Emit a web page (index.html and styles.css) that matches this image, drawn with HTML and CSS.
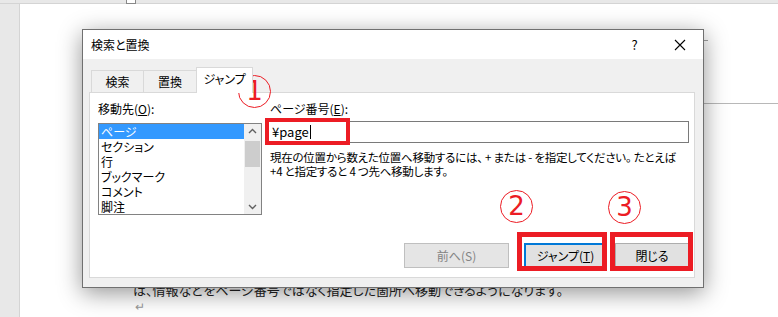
FILE: index.html
```html
<!DOCTYPE html>
<html lang="ja">
<head>
    <meta charset="utf-8" />
    <title>検索と置換</title>
    <link rel="stylesheet" href="styles.css">
</head>
<body>
<!--Word の背景-->
<div class="word">
    <div class="ruler-top"><span class="tab-mark"></span></div>
    <div class="ruler-left"></div>
    <div class="page">
        <span class="corner"></span>
        <span class="margin-line"></span>
        <p class="behind">は、情報などをページ番号ではなく指定した箇所へ移動できるようになります。</p>
        <p class="ret">↵</p>
    </div>
</div>

<!--ダイアログ-->
<div class="dialog">
    <div class="title-bar">
        <span class="title">検索と置換</span>
        <span class="title-btn">?</span>
        <span class="title-btn close">
            <svg width="12" height="12" viewBox="0 0 12 12"><path d="M1 1L11 11M11 1L1 11" stroke="#000" stroke-width="1.1" fill="none"/></svg>
        </span>
    </div>
    <div class="dlg-body">
        <ul class="tabs">
            <li class="tab">検索</li>
            <li class="tab">置換</li>
            <li class="tab active">ジャンプ</li>
        </ul>
        <div class="panel">
            <div class="col-left">
                <label class="lbl">移動先(<u>O</u>):</label>
                <div class="listbox">
                    <ul class="items">
                        <li class="sel">ページ</li>
                        <li>セクション</li>
                        <li>行</li>
                        <li>ブックマーク</li>
                        <li>コメント</li>
                        <li>脚注</li>
                    </ul>
                    <div class="vscroll">
                        <svg class="arrow" width="17" height="15" viewBox="0 0 17 15"><polyline points="5,9 8.5,5.5 12,9" fill="none" stroke="#606060" stroke-width="1.4"/></svg>
                        <div class="thumb"></div>
                        <svg class="arrow down" width="17" height="15" viewBox="0 0 17 15"><polyline points="5,6 8.5,9.5 12,6" fill="none" stroke="#606060" stroke-width="1.4"/></svg>
                    </div>
                </div>
            </div>
            <div class="col-right">
                <label class="lbl">ページ番号(<u>E</u>):</label>
                <div class="input">¥page<span class="caret"></span></div>
                <p class="help">現在の位置から数えた位置へ移動するには、 + または - を指定してください。 たとえば<br>+4 と指定すると 4 つ先へ移動します。</p>
                <div class="buttons">
                    <span class="btn btn-prev" >前へ(S)</span>
                    <span class="btn btn-jump">ジャンプ(<u>T</u>)</span>
                    <span class="btn btn-close">閉じる</span>
                </div>
            </div>
        </div>
    </div>
</div>

<!--注釈-->
<div class="redbox rb1"></div>
<div class="redbox rb2"></div>
<div class="redbox rb3"></div>
<div class="num n1">1</div>
<div class="num n2">2</div>
<div class="num n3">3</div>
</body>
</html>
```

FILE: styles.css
```css
/*page*/
html,body{margin:0;padding:0;}
body{
    width:778px;
    height:317px;
    overflow:hidden;
    position:relative;
    background:#fff;
    font-family:"Noto Sans CJK JP","Noto Sans",sans-serif;
    font-size:12px;
    color:#000;
    font-feature-settings:"palt";
}
.word{
    display:grid;
    grid-template-columns:20px 1fr;
    grid-template-rows:4px 1fr;
    height:317px;
}
.ruler-top{grid-column:1 / 3;background:#e8e8e8;border-bottom:1px solid #d4d4d4;position:relative;}
.tab-mark{position:absolute;left:126px;top:-1px;width:8px;height:3px;background:#fff;border:1px solid #888;}
.ruler-left{background:#e8e8e8;border-right:1px solid #d4d4d4;}
.page{position:relative;padding:277px 0 0 113px;}
.corner{position:absolute;left:683px;top:26px;width:4px;height:10px;border-left:1px solid #a0a0a0;border-bottom:1px solid #a0a0a0;}
.margin-line{position:absolute;left:683px;top:99px;width:80px;border-top:1px solid #b8b8b8;}
.behind{margin:0;font-size:13px;line-height:17px;color:#222;}
.ret{margin:0;line-height:16px;color:#999;font-size:12px;padding-left:2px;}

/*dialog*/
.dialog{
    position:absolute;
    left:82px;
    top:29px;
    width:620px;
    border:1px solid #707070;
    background:#f0f0f0;
    box-shadow:0 5px 22px rgba(0,0,0,.42);
}
.title-bar{
    height:29px;
    background:#fff;
    display:flex;
    align-items:center;
    padding-left:8px;
}
.title{flex:1;}
.title-btn{width:45px;text-align:center;font-size:13px;}
.title-btn.close{width:46px;display:flex;justify-content:center;}
.close svg{display:block;}
.dlg-body{padding:9px 8px 9px 6px;}
.tabs{
    list-style:none;
    margin:0 0 0 2px;padding:0;
    display:flex;
    align-items:flex-end;
    height:24px;
    position:relative;
    z-index:1;
}
.tab{
    height:21px;
    line-height:21px;
    text-align:center;
    border:1px solid #d9d9d9;
    border-bottom:none;
    width:51px;
    margin-right:-1px;
}
.tab:nth-child(2){width:52px;}
.tab.active{
    background:#fff;
    height:25px;
    line-height:22px;
    width:55px;
    margin-bottom:-1px;
}
.panel{
    background:#fff;
    border:1px solid #d9d9d9;
    height:184px;
    display:flex;
}
.lbl{display:block;line-height:16px;height:16px;}
.col-left{width:164px;padding:8px 0 0 8px;flex:none;}
.col-left .lbl{margin-bottom:6px;}
.listbox{
    display:flex;
    width:162px;
    height:90px;
    border:1px solid #828282;
}
.items{list-style:none;margin:0;padding:0;flex:1;}
.items li{height:15px;line-height:15px;padding-left:2px;white-space:nowrap;}
.items li.sel{background:#3399ff;color:#fff;}
.vscroll{width:17px;background:#f0f0f0;display:flex;flex-direction:column;}
.arrow{display:block;}
.thumb{height:26px;margin:2px 1px 0 1px;background:#cdcdcd;}
.arrow.down{margin-top:auto;}
.col-right{
    flex:1;
    min-width:0;
    padding:8px 5px 9px 5px;
    display:flex;
    flex-direction:column;
}
.col-right .lbl{padding-left:3px;margin-bottom:4px;}
.input{
    height:20px;
    line-height:20px;
    border:1px solid #7a7a7a;
    padding-left:4px;
    font-size:13px;
}
.caret{display:inline-block;width:1px;height:14px;background:#000;vertical-align:-2px;margin-left:1px;}
.help{margin:7px 0 0 3px;line-height:14px;white-space:nowrap;font-size:11.5px;letter-spacing:-0.25px;}
.buttons{margin-top:auto;display:flex;justify-content:flex-end;}
.btn{
    height:23px;
    line-height:23px;
    border:1px solid #adadad;
    background:#e1e1e1;
    text-align:center;
}
.btn-prev{width:103px;color:#838383;background:#e5e5e5;border-color:#bfbfbf;margin-right:15px;}
.btn-jump{width:79px;border:2px solid #0078d7;height:21px;line-height:21px;margin-right:8px;}
.btn-close{width:72px;}

/*注釈*/
.redbox{position:absolute;border:5px solid #ec1c24;box-sizing:border-box;}
.rb1{left:265px;top:118px;width:85px;height:27px;border-width:4px;}
.rb2{left:517px;top:232px;width:90px;height:39px;}
.rb3{left:610px;top:232px;width:83px;height:39px;}
.num{
    position:absolute;
    width:31px;height:31px;
    border:1.5px solid #ec1c24;
    border-radius:50%;
    color:#ec1c24;
    font-family:"DejaVu Sans",sans-serif;
    font-size:26px;
    line-height:31px;
    text-align:center;
}
.n1{left:238px;top:75px;}
.n2{left:500px;top:190px;}
.n3{left:608px;top:191px;}
```
